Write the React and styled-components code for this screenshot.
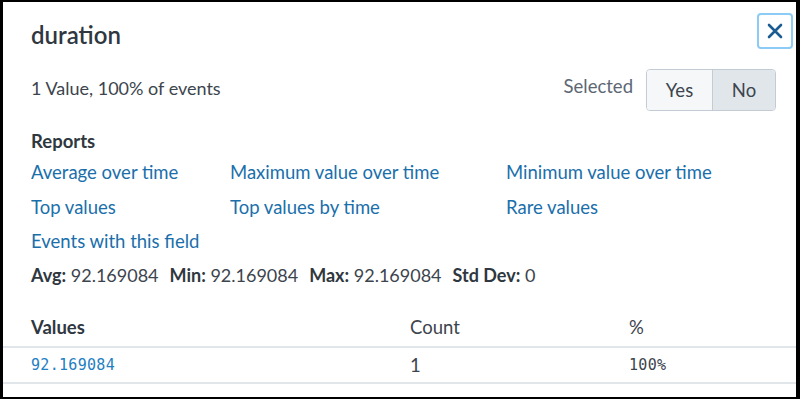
import React from "react";
import styled, { createGlobalStyle } from "styled-components";

const Global = createGlobalStyle`
  html, body { margin: 0; padding: 0; background: #000; }
  body { font-family: "Lato", "Liberation Sans", sans-serif; }
`;

const Panel = styled.div`
  box-sizing: border-box;
  width: 793px;
  height: 395px;
  margin: 2px 0 0 3px;
  background: #fff;
  color: #3c444d;
  display: flex;
  flex-direction: column;
  overflow: hidden;
  font-size: 18.5px;
`;

const Header = styled.div`
  display: flex;
  align-items: flex-start;
  justify-content: space-between;
  padding: 11px 3px 0 28px;
`;

const Title = styled.h1`
  margin: 7px 0 0;
  font-size: 24px;
  font-weight: 600;
  line-height: 30px;
  color: #2f3740;
`;

const CloseButton = styled.button`
  box-sizing: border-box;
  width: 36px;
  height: 36px;
  padding: 0;
  background: #fff;
  border: 2px solid #8ccbf5;
  border-radius: 4px;
  display: flex;
  align-items: center;
  justify-content: center;
  cursor: pointer;
`;

const SummaryRow = styled.div`
  display: flex;
  align-items: center;
  justify-content: space-between;
  padding: 0 20px 0 28px;
  margin-top: 19px;
`;

const Summary = styled.div`
  font-size: 18px;
  line-height: 22px;
  margin-top: -5px;
`;

const SelectedGroup = styled.div`
  display: flex;
  align-items: center;
  gap: 13px;
`;

const SelectedLabel = styled.span`
  color: #5c6773;
  margin-top: -9px;
`;

const Toggle = styled.div`
  display: flex;
  border: 1px solid #c3cbd4;
  border-radius: 4px;
  overflow: hidden;
  height: 42px;
  box-sizing: border-box;
`;

const ToggleButton = styled.button`
  border: none;
  border-left: ${(p) => (p.$first ? "none" : "1px solid #c3cbd4")};
  background: ${(p) => (p.$active ? "#e1e6eb" : "#f5f7f9")};
  color: #3c444d;
  font-family: inherit;
  font-size: 18.5px;
  width: ${(p) => p.$w}px;
  padding: 0;
  cursor: pointer;
`;

const SectionTitle = styled.div`
  font-weight: 700;
  line-height: 22px;
  margin: 19px 0 0 28px;
  color: #2f3740;
`;

const LinkGrid = styled.div`
  display: grid;
  grid-template-columns: 199px 276px 1fr;
  grid-auto-rows: 34.5px;
  align-items: center;
  padding-left: 28px;
  margin-top: 3px;
`;

const ReportLink = styled.a`
  color: #1a6fab;
  text-decoration: none;
  cursor: pointer;
  line-height: 22px;
`;

const Stats = styled.div`
  display: flex;
  gap: 11px;
  padding-left: 28px;
  margin-top: 5px;
  line-height: 22px;
  font-size: 18px;
`;

const Stat = styled.span`
  white-space: nowrap;
  b { font-weight: 700; color: #2f3740; }
`;

const TableRow = styled.div`
  display: grid;
  grid-template-columns: 379px 219px 1fr;
  padding-left: 28px;
  align-items: center;
  height: ${(p) => p.$h}px;
  border-bottom: 2px solid #e1e6eb;
  box-sizing: border-box;
`;

const HeadCell = styled.div`
  font-weight: ${(p) => (p.$bold ? 700 : 400)};
  color: ${(p) => (p.$bold ? "#2f3740" : "#3c444d")};
  line-height: 22px;
`;

const MonoCell = styled.div`
  font-family: "DejaVu Sans Mono", "Liberation Mono", monospace;
  font-size: 15px;
  color: ${(p) => (p.$link ? "#1f80c2" : "#3c444d")};
  letter-spacing: 0.3px;
`;

const PlainCell = styled.div`
  line-height: 22px;
`;

const Table = styled.div`
  margin-top: 23px;
`;

export default function App() {
  return (
    <>
      <Global />
      <Panel>
        <Header>
          <Title>duration</Title>
          <CloseButton aria-label="Close">
            <svg width="16" height="16" viewBox="0 0 16 16">
              <path d="M2 2 L14 14 M14 2 L2 14" stroke="#1b5d92" strokeWidth="2.6" strokeLinecap="round" />
            </svg>
          </CloseButton>
        </Header>
        <SummaryRow>
          <Summary>1 Value, 100% of events</Summary>
          <SelectedGroup>
            <SelectedLabel>Selected</SelectedLabel>
            <Toggle>
              <ToggleButton $first $w={65}>Yes</ToggleButton>
              <ToggleButton $active $w={63}>No</ToggleButton>
            </Toggle>
          </SelectedGroup>
        </SummaryRow>
        <SectionTitle>Reports</SectionTitle>
        <LinkGrid>
          <ReportLink>Average over time</ReportLink>
          <ReportLink>Maximum value over time</ReportLink>
          <ReportLink>Minimum value over time</ReportLink>
          <ReportLink>Top values</ReportLink>
          <ReportLink>Top values by time</ReportLink>
          <ReportLink>Rare values</ReportLink>
          <ReportLink>Events with this field</ReportLink>
        </LinkGrid>
        <Stats>
          <Stat><b>Avg:</b> 92.169084</Stat>
          <Stat><b>Min:</b> 92.169084</Stat>
          <Stat><b>Max:</b> 92.169084</Stat>
          <Stat><b>Std Dev:</b> 0</Stat>
        </Stats>
        <Table>
          <TableRow $h={39}>
            <HeadCell $bold>Values</HeadCell>
            <HeadCell>Count</HeadCell>
            <HeadCell>%</HeadCell>
          </TableRow>
          <TableRow $h={36}>
            <MonoCell $link>92.169084</MonoCell>
            <PlainCell>1</PlainCell>
            <MonoCell>100%</MonoCell>
          </TableRow>
        </Table>
      </Panel>
    </>
  );
}
